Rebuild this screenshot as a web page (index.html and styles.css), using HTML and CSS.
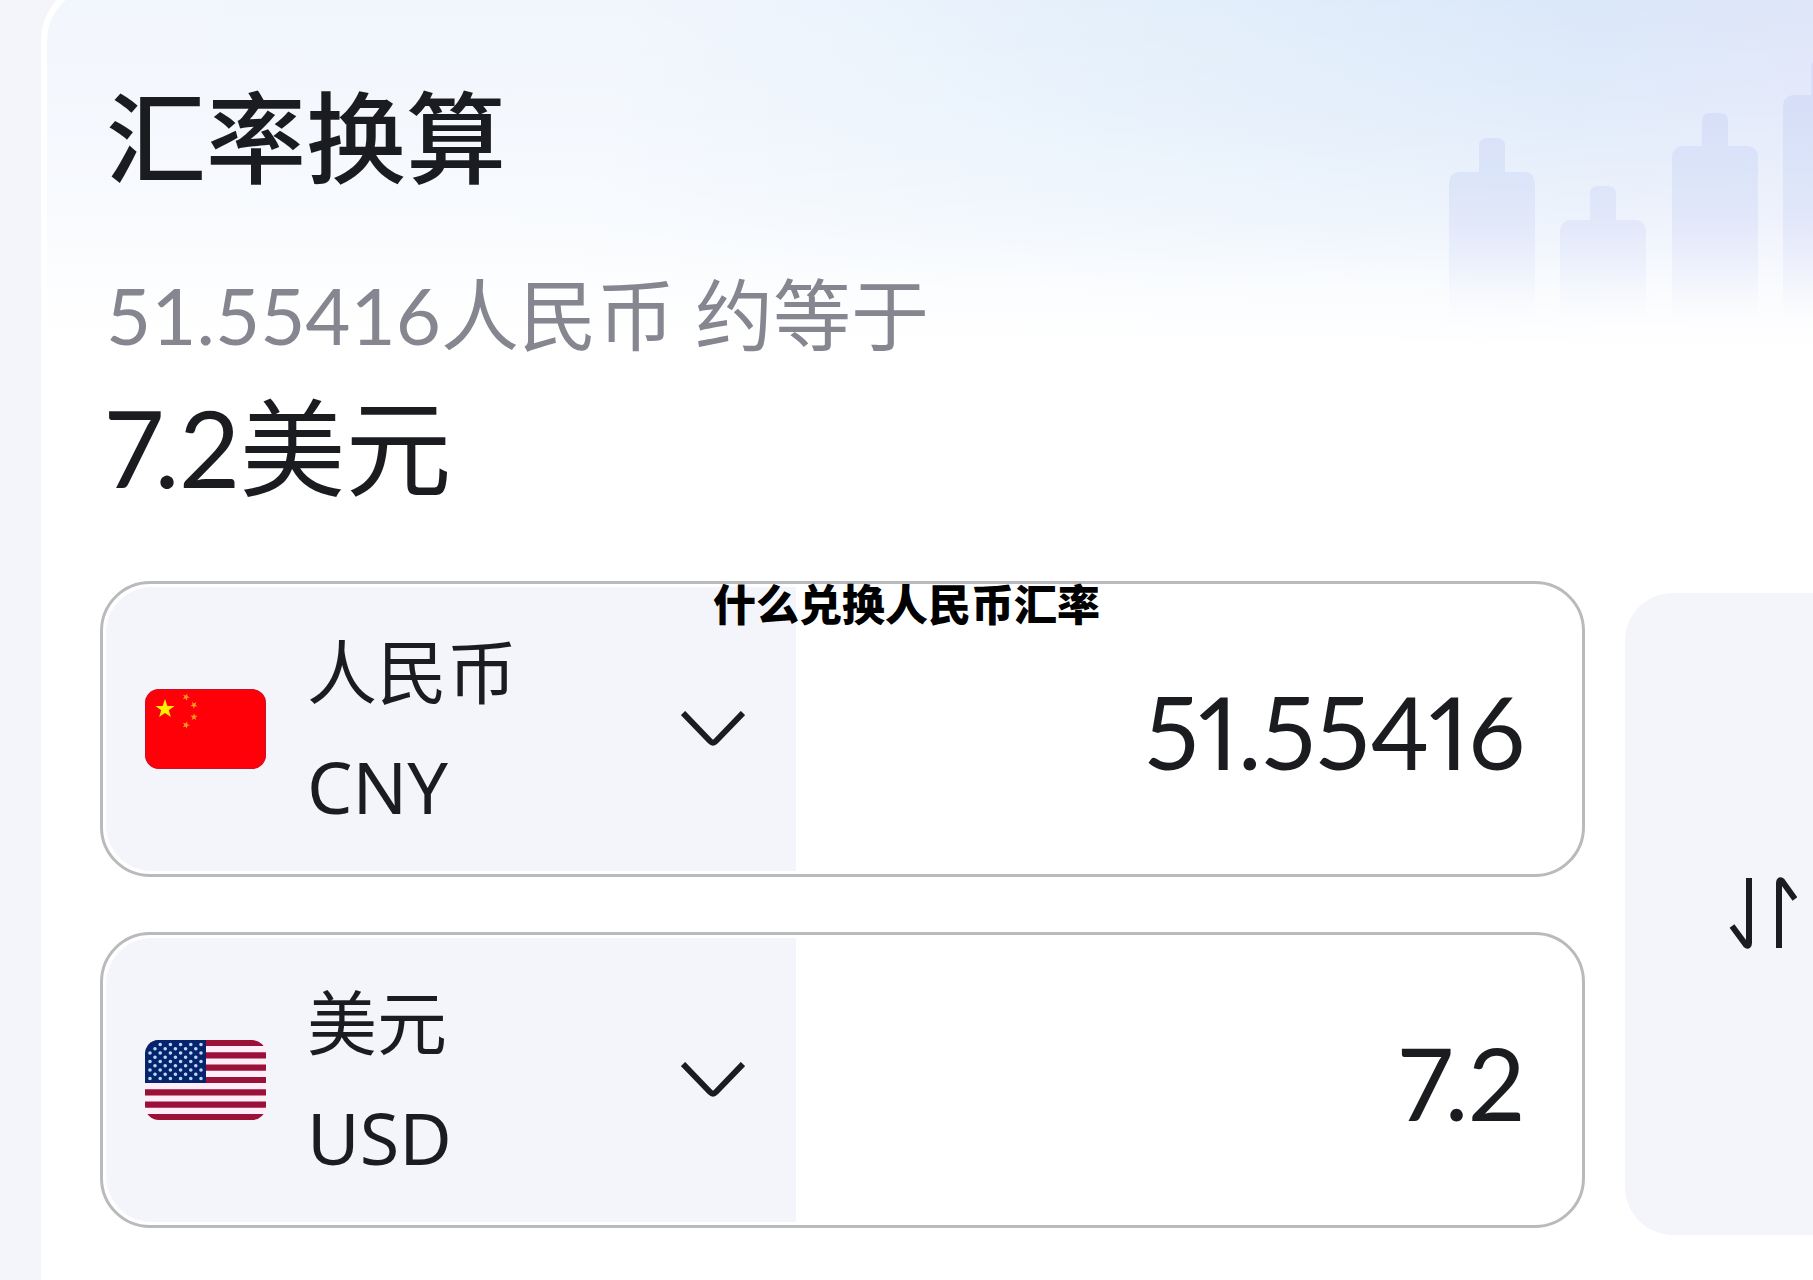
FILE: index.html
```html
<!DOCTYPE html>
<html lang="zh-CN">
<head>
    <meta charset="UTF-8">
    <meta name="viewport" content="width=device-width, initial-scale=1.0">
    <title>汇率换算</title>
    <link rel="stylesheet" href="styles.css">
</head>
<body>
    <main class="card">
        <svg class="candles" viewBox="0 0 364 350" aria-hidden="true">
            <defs>
                <linearGradient id="fade" gradientUnits="userSpaceOnUse" x1="0" y1="90" x2="0" y2="320">
                    <stop offset="0" stop-color="#d7def9"/>
                    <stop offset="0.35" stop-color="#d9e3f8" stop-opacity="0.9"/>
                    <stop offset="0.6" stop-color="#dde3f9" stop-opacity="0.65"/>
                    <stop offset="1" stop-color="#e6eafc" stop-opacity="0"/>
                </linearGradient>
            </defs>
            <g fill="url(#fade)">
                <path d="M0 350V184q0-12 12-12h18v-26q0-8 8-8h10q8 0 8 8v26h18q12 0 12 12v166z"/>
                <path d="M111 350V232q0-12 12-12h18v-26q0-8 8-8h10q8 0 8 8v26h18q12 0 12 12v118z"/>
                <path d="M223 350V158q0-12 12-12h18v-25q0-8 8-8h10q8 0 8 8v25h18q12 0 12 12v192z"/>
                <path d="M334 350V107q0-12 12-12h16V69q0-6 2-7v288z"/>
            </g>
        </svg>

        <h1>汇率换算</h1>
        <p class="from">51.55416人民币 约等于</p>
        <p class="to">7.2美元</p>

        <form class="converter">
            <div class="rows">
                <div class="row">
                    <div class="currency">
                        <svg class="flag" viewBox="0 0 121 80" aria-hidden="true">
                            <defs>
                                <path id="star" d="M0-10 2.4-3.1 9.5-3.1 3.8 1.2 5.9 8.1 0 4 -5.9 8.1 -3.8 1.2 -9.5-3.1 -2.4-3.1z"/>
                            </defs>
                            <rect width="121" height="80" fill="#ff0009"/>
                            <rect x="0.5" y="0.5" width="120" height="79" rx="14" fill="none" stroke="#c8102a"/>
                            <use href="#star" fill="#ffee00" transform="translate(20 20)"/>
                            <g fill="#ff9a1f">
                                <use href="#star" transform="translate(41 8) rotate(20) scale(0.38)"/>
                                <use href="#star" transform="translate(49 16) rotate(40) scale(0.38)"/>
                                <use href="#star" transform="translate(49 28) scale(0.38)"/>
                                <use href="#star" transform="translate(41 36) rotate(20) scale(0.38)"/>
                            </g>
                        </svg>
                        <div class="names">
                            <label for="fromCode">人民币</label>
                            <select id="fromCode">
                                <option selected>CNY</option>
                                <option>USD</option>
                            </select>
                        </div>
                        <svg class="chevron" viewBox="0 0 64 36" aria-hidden="true">
                            <path d="M2 2 29 30q3 3 6 0L62 2"/>
                        </svg>
                    </div>
                    <input class="amount" id="fromAmount" type="text" inputmode="decimal" value="51.55416" aria-label="人民币">
                </div>

                <div class="row">
                    <div class="currency">
                        <svg class="flag" viewBox="0 0 121 80" aria-hidden="true">
                            <rect width="121" height="80" fill="#ffedf7"/>
                            <path d="M0 3h121M0 15.300h121M0 27.600h121M0 40h121M0 52.300h121M0 64.600h121M0 77h121" stroke="#9b1039" stroke-width="6.200"/>
                            <rect width="61" height="43" fill="#06246b"/>
                            <g fill="none" stroke="#b9d8f8" stroke-width="3.600" stroke-linecap="round" stroke-dasharray="0 10.200">
                                <path d="M15.200 4.500H58M5 13H58M5 21.500H58M5 30H58M5 38.500H58"/>
                                <path d="M10 8.800H58M10 17.300H58M10 25.800H58M10 34.300H58"/>
                            </g>
                        </svg>
                        <div class="names">
                            <label for="toCode">美元</label>
                            <select id="toCode">
                                <option>CNY</option>
                                <option selected>USD</option>
                            </select>
                        </div>
                        <svg class="chevron" viewBox="0 0 64 36" aria-hidden="true">
                            <path d="M2 2 29 30q3 3 6 0L62 2"/>
                        </svg>
                    </div>
                    <input class="amount" id="toAmount" type="text" inputmode="decimal" value="7.2" aria-label="美元">
                </div>
            </div>

            <button class="swap" id="swapButton" type="button" aria-label="互换">
                <svg viewBox="0 0 68 72" aria-hidden="true">
                    <path d="M20 1v65q0 4-3 2L3 49M50 71V6q0-4 3-2l13 18"/>
                </svg>
            </button>
        </form>
    </main>

    <div class="caption">什么兑换人民币汇率</div>
</body>
</html>
```

FILE: styles.css
```css
* {
    box-sizing: border-box;
}

body {
    position: relative;
    margin: 0;
    min-height: 100vh;
    overflow: hidden;
    background-color: #f4f5fa;
    color: #1b1c20;
    font-family: Lato, "Noto Sans CJK SC", sans-serif;
}

.card {
    position: relative;
    min-height: calc(100vh + 18px);
    margin: -18px 0 0 41px;
    padding: 89px 0 50px 59px;
    border-left: 6px solid #fff;
    border-top: 6px solid #fff;
    border-top-left-radius: 58px;
    background:
        linear-gradient(to bottom, rgba(255, 255, 255, 0) 0, rgba(255, 255, 255, 0.2) 120px, rgba(255, 255, 255, 0.5) 230px, rgba(255, 255, 255, 0.85) 300px, #fff 360px),
        linear-gradient(105deg, #f2f6fd 0%, #f1f6fd 28%, #e3effb 52%, #dae7f9 74%, #e1e4f9 92%) #fff;
    background-origin: padding-box;
    background-clip: padding-box;
}

.candles {
    position: absolute;
    top: 12px;
    right: 0;
    width: 364px;
    height: 350px;
}

h1 {
    margin: 0;
    font-size: 100px;
    font-weight: 500;
    line-height: 120px;
}

p {
    margin: 0;
}

.from {
    margin-top: 68px;
    color: #85868f;
    font-size: 78px;
    line-height: 100px;
}

.to {
    margin-top: 22px;
    font-size: 106px;
    font-variant-numeric: proportional-nums;
    line-height: 120px;
}

.converter {
    display: flex;
    align-items: flex-start;
    gap: 40px;
    margin: 74px 0 0 -6px;
}

.rows {
    flex: 1;
    display: flex;
    flex-direction: column;
    gap: 55px;
    min-width: 0;
}

.row {
    display: flex;
    height: 296px;
    padding: 3px;
    border: 3px solid #b9babd;
    border-radius: 50px;
    background-color: #fff;
}

.currency {
    flex: 0 0 690px;
    display: flex;
    align-items: center;
    padding: 0 51px 0 39px;
    border-radius: 46px 0 0 46px;
    background-color: #f4f5fa;
}

.flag {
    width: 121px;
    height: 80px;
    border-radius: 14px;
}

.names {
    flex: 1;
    display: flex;
    flex-direction: column;
    gap: 14px;
    margin-left: 41px;
    font-family: "Noto Sans", "Noto Sans CJK SC", sans-serif;
    font-size: 70px;
    line-height: 100px;
}

.names select {
    height: 100px;
    padding: 0;
    border: none;
    background: none;
    color: inherit;
    font: inherit;
    font-size: 72px;
    appearance: none;
    cursor: pointer;
}

.chevron {
    width: 64px;
    height: 36px;
}

.chevron path,
.swap path {
    fill: none;
    stroke: #1b1c20;
    stroke-width: 6px;
}

.amount {
    flex: 1;
    min-width: 0;
    padding: 4px 54px 0 20px;
    border: none;
    background: none;
    color: inherit;
    font-family: inherit;
    font-size: 100px;
    font-variant-numeric: proportional-nums;
    text-align: right;
    outline: none;
}

.swap {
    flex: 0 0 188px;
    height: 642px;
    margin-top: 12px;
    padding: 0 0 0 104px;
    border: none;
    border-radius: 48px 0 0 48px;
    background-color: #f4f5fa;
    text-align: left;
    cursor: pointer;
}

.swap svg {
    width: 68px;
    height: 72px;
}

.caption {
    position: absolute;
    top: 572px;
    left: 0;
    width: 100%;
    color: #000;
    font-family: "Noto Sans CJK SC", sans-serif;
    font-size: 43px;
    font-weight: 900;
    line-height: 60px;
    text-align: center;
    pointer-events: none;
}
```
